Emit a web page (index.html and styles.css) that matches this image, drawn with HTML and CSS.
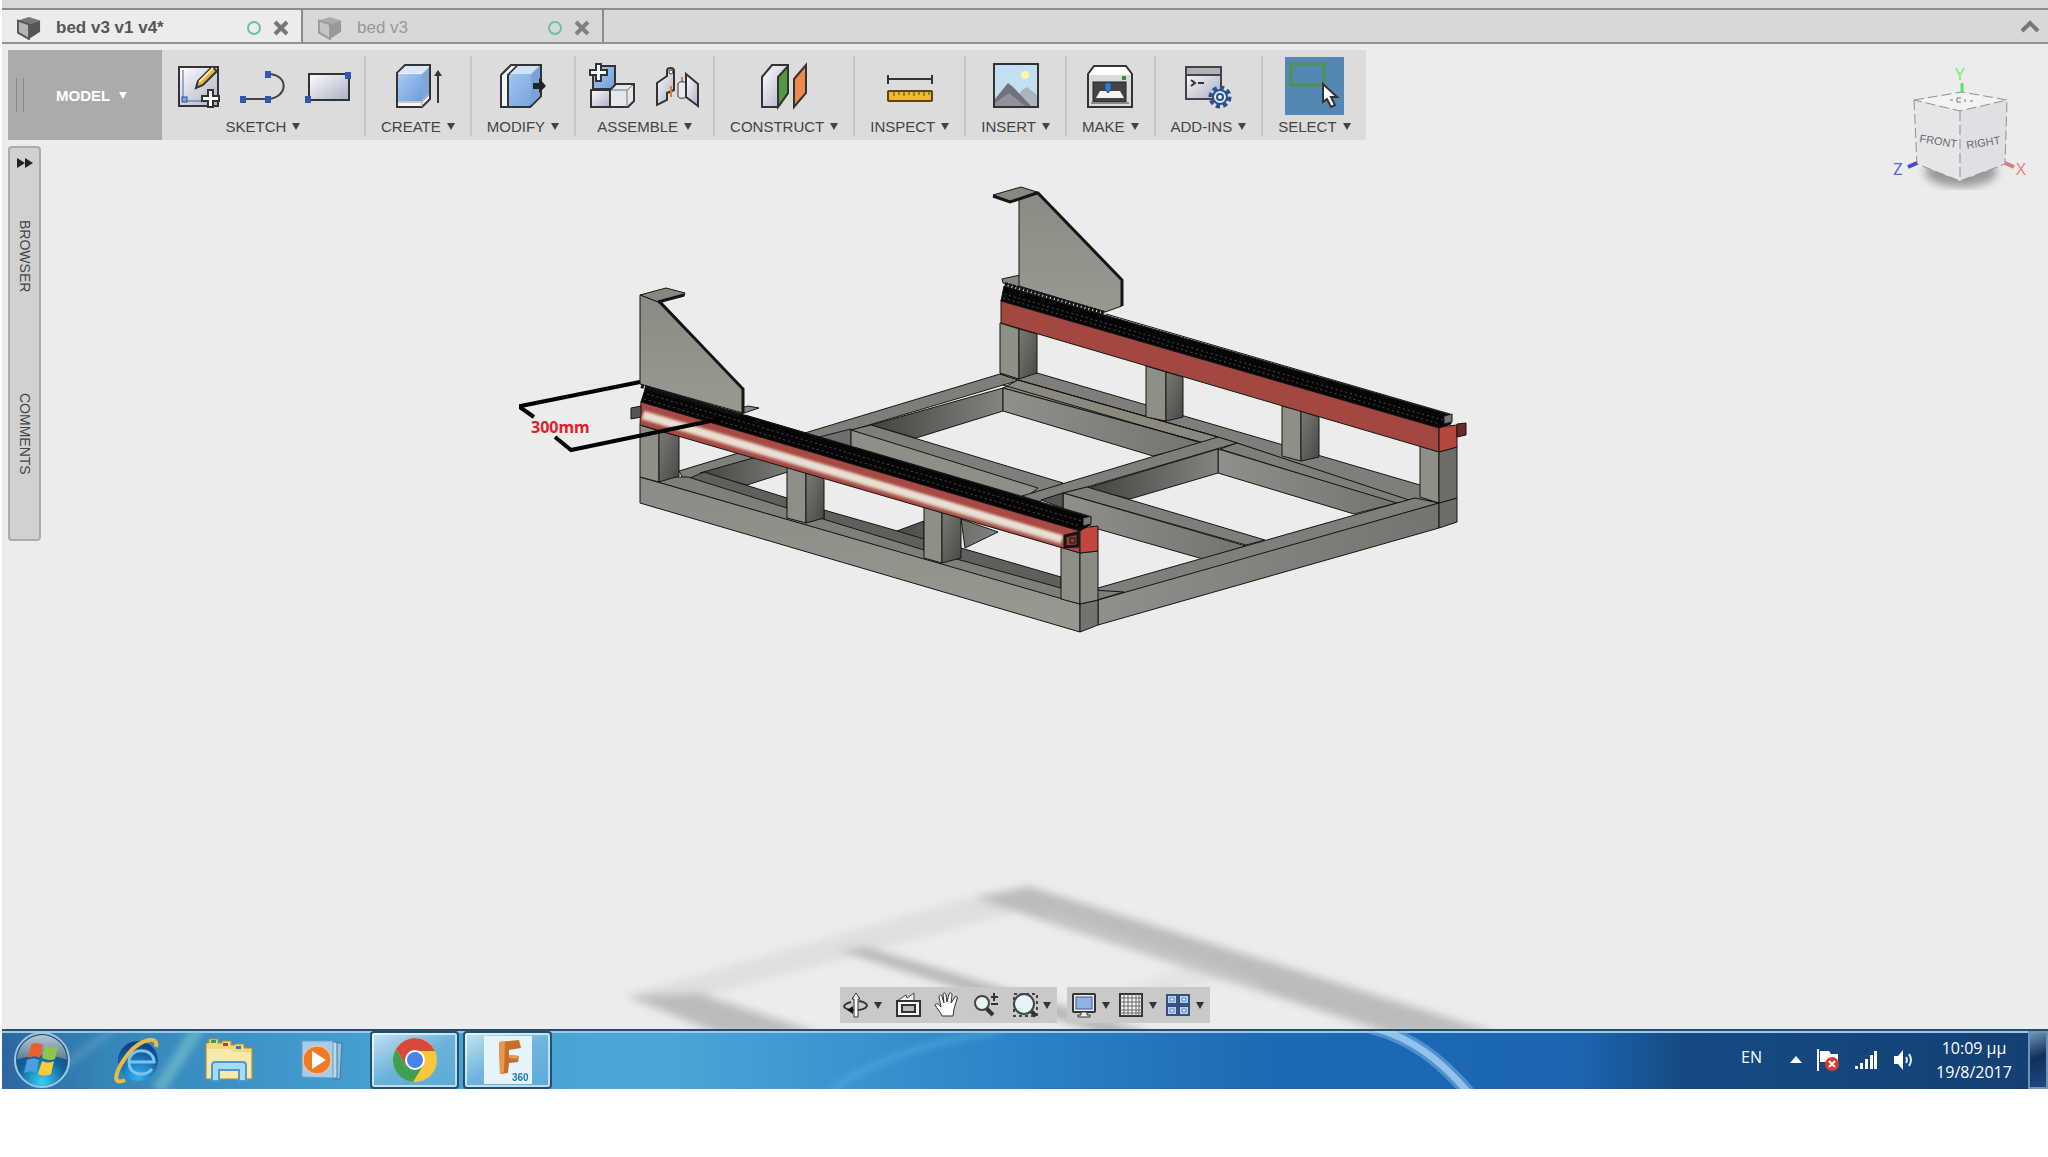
FILE: index.html
```html
<!DOCTYPE html>
<html lang="en">
<head>
<meta charset="UTF-8">
<meta name="viewport" content="width=device-width, initial-scale=1.0">
<title>bed v3 v1 v4*</title>
<link rel="stylesheet" href="styles.css">
</head>
<body>
<div class="desktop">

    <!-- document tabs -->
    <header class="tabs">
        <div class="tab tab-active">
            <svg class="tab-cube" viewBox="0 0 26 26"><path d="M1 5 13 1 25 5 13 9z" fill="#777"/><path d="M1 5 13 9V25L1 18z" fill="#b4b4b4" stroke="#555" stroke-width="2"/><path d="M13 9 25 5V17L13 25z" fill="#555"/></svg>
            <a class="tab-name" href="#">bed v3 v1 v4*</a>
            <span class="tab-status"></span>
            <button class="icon-button" aria-label="Close bed v3 v1 v4"><svg width="16" height="16" viewBox="0 0 16 16"><path d="M2 2 14 14M14 2 2 14" stroke="#777" stroke-width="4"/></svg></button>
        </div>
        <div class="tab">
            <svg class="tab-cube" viewBox="0 0 26 26"><path d="M1 5 13 1 25 5 13 9z" fill="#aaa"/><path d="M1 5 13 9V25L1 18z" fill="#c4c4c4" stroke="#999" stroke-width="2"/><path d="M13 9 25 5V17L13 25z" fill="#999"/></svg>
            <a class="tab-name" href="#">bed v3</a>
            <span class="tab-status"></span>
            <button class="icon-button" aria-label="Close bed v3"><svg width="16" height="16" viewBox="0 0 16 16"><path d="M2 2 14 14M14 2 2 14" stroke="#808080" stroke-width="4"/></svg></button>
        </div>
        <button class="icon-button tabs-collapse" aria-label="Collapse"><svg width="20" height="14" viewBox="0 0 20 14"><path d="M2 12 10 4 18 12" fill="none" stroke="#777" stroke-width="4"/></svg></button>
    </header>

    <main class="workspace">
        <svg class="scene" viewBox="2 44 2046 985" preserveAspectRatio="xMidYMin slice">
            <defs>
                <filter id="soft" x="-10%" y="-10%" width="120%" height="120%"><feGaussianBlur stdDeviation="4"/></filter>
                <filter id="tube" x="-5%" y="-20%" width="110%" height="140%"><feGaussianBlur stdDeviation="1"/></filter>
                <linearGradient id="plate" x1="0" y1="0" x2="0" y2="1"><stop offset="0" stop-color="#8a8b84"/><stop offset="1" stop-color="#989991"/></linearGradient>
                <linearGradient id="shade"><stop offset="0" stop-color="#42433f"/><stop offset="1" stop-color="#83847d"/></linearGradient>
                <linearGradient id="unshade"><stop offset="0" stop-color="#8f9089"/><stop offset="1" stop-color="#73746e"/></linearGradient>
                <linearGradient id="post" x1="0" y1="0" x2="1" y2="1"><stop offset="0" stop-color="#7a7b75"/><stop offset="1" stop-color="#474843"/></linearGradient>
            </defs>

            <!-- ground shadow -->
            <g filter="url(#soft)">
                <path d="M985 893 1020 911 690 1000 630 994z" fill="#dfdfdf"/>
                <path d="M1117 990 1185 967 1226 979 1175 995z" fill="#e3e3e3"/>
                <path d="M975 898 1028 886 1500 1034H1392z" fill="#bcbcbc"/>
                <path d="M626 996 698 993 822 1034H720z" fill="#bcbcbc"/>
                <path d="M838 950 868 948 1155 1034H1104z" fill="#b6b6b6"/>
                <path d="M1045 912 1260 984" stroke="#cacaca" stroke-width="4"/>
            </g>

            <!-- base frame: back and inner beams -->
            <g class="edges">
                <path class="top" d="M679 471 1000 374 1020 380 684 480z"/>
                <path fill="url(#shade)" d="M871 425 1003 388V411L916 438z"/>
                <path fill="url(#shade)" d="M700 473 760 456 800 468 747 485z"/>
                <path fill="#6f706a" d="M815 438 851 429V450z"/>
                <path class="top" d="M1000 374 1037 373 1420 485 1439 503 1415 503 1237 443 1218 437 1018 380z"/>
                <path fill="#8b887d" d="M1018 380 1218 437 1204 443 1003 388z"/>
                <path fill="url(#unshade)" d="M1003 388 1204 443 1153 456 1003 411z"/>
                <path class="top" d="M1237 443 1415 502 1397 504 1220 449z"/>
                <path fill="url(#unshade)" d="M1218 449 1397 503 1354 514 1218 473z"/>
                <path class="top" d="M871 425 1063 483 1040 496 851 430z"/>
                <path class="side" d="M851 430 1038 488 1022 500 851 449z"/>
                <path class="top" d="M1218 437 1237 443 1087 487 1063 493 1038 502 1022 496z"/>
                <path fill="url(#shade)" d="M1087 488 1218 449V473L1130 499z"/>
                <path class="top" d="M1087 487 1265 540 1246 545 1063 493z"/>
                <path fill="url(#unshade)" d="M1063 493 1246 546 1203 559 1098 529 1063 515z"/>
                <path fill="#55564f" d="M1041 500 1063 493V508z"/>
                <path d="M1018 380 1218 437M1003 385 1198 442M1385 507 1415 498M1400 509 1439 498" fill="none"/>
            </g>

            <!-- base frame: front beams -->
            <g class="edges">
                <path class="top" d="M1098 588 1397 503 1415 498 1439 503 1098 602z"/>
                <path fill="url(#unshade)" d="M1098 600 1439 503V528L1098 625z"/>
                <path fill="#6d6e68" d="M1439 503 1457 498V522L1439 528z"/>
                <path fill="url(#shade)" d="M924 521V545L886 535zM961 519 998 532 965 548z"/>
                <path fill="#5f605a" d="M704 472 787 498V512L690 478z"/>
                <path fill="#5f605a" d="M824 510 894 530 924 539V553L824 521z"/>
                <path fill="#5f605a" d="M961 548 1061 577V592L958 560z"/>
                <path class="top" d="M640 477 688 477 787 508 924 550 1061 588 1124 592 1080 605z"/>
                <path fill="url(#plate)" d="M640 477 1080 604V632L640 503z"/>
                <path fill="#73746e" d="M1080 604 1098 600V625L1080 632z"/>
            </g>

            <!-- rear posts, beam and rail -->
            <g class="edges">
                <path class="side" d="M1000 323 1019 329V379L1000 373zM1146 366 1166 372V421L1146 417zM1282 406 1301 411V461L1282 456zM1420 446 1439 452V503L1420 497z"/>
                <path fill="url(#post)" d="M1019 329 1037 334V373L1019 379z"/>
                <path fill="url(#post)" d="M1166 372 1183 377V417L1166 421z"/>
                <path fill="url(#post)" d="M1301 411 1319 417V457L1301 461z"/>
                <path fill="#6c6d67" d="M1439 452 1457 447V498L1439 503z"/>
                <path fill="#a34841" d="M1001 300 1439 427V452L1001 323z"/>
                <path fill="#b5453d" d="M1439 427 1457 425V447L1439 452z"/>
                <path fill="#6a2b27" d="M1457 424 1466 423V435L1457 437z"/>
                <path fill="#060606" d="M1004 286 1451 415V424L1439 428 1001 301z"/>
                <path d="M1106 314 1450 414" stroke="#767676"/>
                <path class="teeth" d="M1003 298 1440 424M1004 294 1443 420"/>
                <path fill="#777" d="M1444 416 1452 414V422L1444 424z"/>
                <path fill="#878880" d="M993 195 1021 187 1037 192 1010 202z"/>
                <path fill="#878880" d="M1002 279 1020 275 1110 307 1105 312 1003 283z"/>
                <path fill="url(#plate)" d="M1019 200 1037 192 1122 280V306L1105 312 1019 286z"/>
                <path class="thick" d="M1037 192 1122 280V306M993 196 1010 202 1037 193" fill="none"/>
                <path class="flange" d="M1005 284 1105 313"/>
            </g>

            <!-- front posts, beam, tube and rail -->
            <g class="edges">
                <path class="side" d="M640 425 659 431V482L640 477zM787 467 806 473V523L787 518zM924 507 942 512V563L924 558zM1061 547 1080 553V604L1061 599z"/>
                <path fill="url(#post)" d="M659 431 679 436V476L659 482z"/>
                <path fill="url(#post)" d="M806 473 824 478V518L806 523z"/>
                <path fill="url(#post)" d="M942 512 961 518V558L942 563z"/>
                <path fill="#8a8b84" d="M1080 553 1098 551V600L1080 604z"/>
                <path fill="#a84a43" d="M641 401 1080 529V553L640 425z"/>
                <path fill="#c0463e" d="M1080 528 1098 526V551L1080 553z"/>
                <path fill="#555" d="M631 408 641 406V417L631 419z"/>
            </g>
            <g filter="url(#tube)">
                <path d="M643 415 1062 540" stroke="#c89a8e" stroke-width="10"/>
                <path d="M643 415 1062 539" stroke="#e9dfd2" stroke-width="7"/>
            </g>
            <g class="edges">
                <path class="thick" fill="#8f3d37" d="M1065 536 1078 533V546L1065 547z"/>
                <path fill="none" d="M1070 538H1075V543H1070z"/>
                <path fill="#060606" d="M646 386 1090 517V525L1080 531 641 402z"/>
                <path d="M745 415 1089 516" stroke="#767676"/>
                <path class="teeth" d="M644 399 1080 526M647 394 1082 521"/>
                <path fill="#777" d="M1083 518 1091 516V524L1083 526z"/>
                <path fill="#878880" d="M738 409 748 406 759 408 741 414z"/>
                <path fill="#878880" d="M640 295 666 288 685 293 684 296 658 302z"/>
                <path fill="url(#plate)" d="M640 295 658 302 743 389V413L640 384z"/>
                <path class="thick" d="M660 302 743 389V413M658 302 684 295" fill="none"/>
                <path class="flange" d="M641 386 741 415"/>
            </g>

            <!-- dimension -->
            <path class="dimension" d="M640 382 521 406V408L534 417M555 437 571 450 720 419"/>
            <text class="dimension-text" x="531" y="433">300mm</text>
        </svg>

        <!-- ribbon -->
        <div class="ribbon">
            <button class="model-button">MODEL<span class="caret"></span></button>

            <div class="tool-group wide">
                <div class="tools">
                    <button class="icon-button" aria-label="Create sketch"><svg class="tool-icon" viewBox="0 0 48 48"><defs><linearGradient id="paper" x1="0" y1="0" x2="1" y2="1"><stop offset="0" stop-color="#fff"/><stop offset="1" stop-color="#aab0c2"/></linearGradient></defs><rect x="5" y="5" width="39" height="39" fill="url(#paper)" stroke="#333" stroke-width="2"/><path d="M9 8V39H32" fill="none" stroke="#3f68b8" stroke-width="1"/><rect x="8" y="35" width="5" height="5" fill="#7fa7e0" stroke="#2850a0"/><path d="M22 26 24 19 38 5 43 9 29 23z" fill="#e8b33b" stroke="#333" stroke-width="2"/><path d="M25 20 39 6" stroke="#ffe9a8" stroke-width="2"/><path d="M34 28H39V34H45V39H39V45H34V39H28V34H34z" fill="#fff" stroke="#333" stroke-width="2"/></svg></button>
                    <button class="icon-button" aria-label="Line"><svg class="tool-icon" viewBox="0 0 48 48"><path d="M4 37H28C50 36 50 12 29 12" fill="none" stroke="#444" stroke-width="2"/><path d="M1 34h6v7h-6zM26 34h6v7h-6zM26 9h6v7h-6z" fill="#2f58b4"/></svg></button>
                    <button class="icon-button" aria-label="Rectangle"><svg class="tool-icon" viewBox="0 0 48 48"><rect x="5" y="12" width="40" height="26" fill="url(#paper)" stroke="#333" stroke-width="2"/><path d="M1 34h6v7H1zM41 10h6v7h-6z" fill="#2f58b4"/></svg></button>
                </div>
                <button class="group-label">SKETCH<span class="caret"></span></button>
            </div>

            <div class="tool-group">
                <div class="tools">
                    <button class="icon-button" aria-label="Extrude"><svg class="tool-icon" viewBox="0 0 48 48"><defs><linearGradient id="blue" x1="0" y1="0" x2="1" y2="1"><stop offset="0" stop-color="#a9ccf3"/><stop offset="1" stop-color="#6c9dd8"/></linearGradient></defs><path d="M3 11 11 3H36V37L28 45H3z" fill="#f2f4f7" stroke="#333" stroke-width="2"/><path d="M4 12H28V39H4z" fill="url(#blue)"/><path d="M4 11 12 4H35L28 11z" fill="#d8e8fa"/><path d="M28 12 35 5V32L28 39z" fill="#7fa8d8"/><path d="M4 40H28L35 33M28 40V45" fill="none" stroke="#999"/><path d="M44 41V12" stroke="#333" stroke-width="2"/><path d="M44 8 48 14H40z" fill="#333"/></svg></button>
                </div>
                <button class="group-label">CREATE<span class="caret"></span></button>
            </div>

            <div class="tool-group">
                <div class="tools">
                    <button class="icon-button" aria-label="Press pull"><svg class="tool-icon" viewBox="0 0 48 48"><path d="M2 13 12 3H42V34L31 45H2z" fill="#f2f4f7" stroke="#333" stroke-width="2"/><path d="M9 13 19 3H42V34L31 45H9z" fill="url(#blue)" stroke="#333" stroke-width="2"/><path d="M11 12 19 4H40L32 12z" fill="#cfe2f8"/><path d="M32 13 41 4V34L32 43z" fill="#78a3d6"/><path d="M34 21H40V16L47 24 40 31V27H34z" fill="#222"/></svg></button>
                </div>
                <button class="group-label">MODIFY<span class="caret"></span></button>
            </div>

            <div class="tool-group wide">
                <div class="tools">
                    <button class="icon-button" aria-label="New component"><svg class="tool-icon" viewBox="0 0 48 48"><path d="M5 12 10 4H27V27H5z" fill="url(#blue)" stroke="#333" stroke-width="2"/><path d="M3 28H22V45H3z" fill="url(#paper)" stroke="#333" stroke-width="2"/><path d="M22 28 28 22H46V39L40 45H22z" fill="#e4e7ec" stroke="#333" stroke-width="2"/><path d="M23 28H39V45M39 28 45 23" stroke="#777" fill="none"/><path d="M8 2H13V8H19V13H13V19H8V13H2V8H8z" fill="#fff" stroke="#333" stroke-width="2"/></svg></button>
                    <button class="icon-button" aria-label="Joint"><svg class="tool-icon" viewBox="0 0 48 48"><path d="M4 21 14 14V9C14 5 21 5 21 9V28L14 31V38L4 43z" fill="url(#paper)" stroke="#333" stroke-width="2"/><circle cx="18" cy="10" r="2" fill="#fff" stroke="#333"/><path d="M18 24V35M29 15V24" stroke="#e8792b" stroke-width="2"/><path d="M25 22C25 19 33 19 33 22V34C33 37 25 37 25 34z" fill="#e8eaee" stroke="#333"/><path d="M33 12 45 22V44L33 35z" fill="url(#paper)" stroke="#333" stroke-width="2"/></svg></button>
                </div>
                <button class="group-label">ASSEMBLE<span class="caret"></span></button>
            </div>

            <div class="tool-group">
                <div class="tools">
                    <button class="icon-button" aria-label="Offset plane"><svg class="tool-icon" viewBox="0 0 48 48"><path d="M2 15 12 3H28V31L18 45H2z" fill="url(#paper)" stroke="#333" stroke-width="2"/><path d="M18 15 28 4V31L18 45z" fill="#4f9b3f" stroke="#333" stroke-width="2"/><path d="M34 17 46 3V31L34 45z" fill="#ed8a50" stroke="#333" stroke-width="2"/></svg></button>
                </div>
                <button class="group-label">CONSTRUCT<span class="caret"></span></button>
            </div>

            <div class="tool-group">
                <div class="tools">
                    <button class="icon-button" aria-label="Measure"><svg class="tool-icon" viewBox="0 0 48 48"><path d="M2 13V22M46 13V22M2 17H46" stroke="#333" stroke-width="2"/><rect x="2" y="29" width="44" height="10" rx="1" fill="#f0b92f" stroke="#5b4510" stroke-width="2"/><path d="M8 30v4M13 30v3M18 30v4M23 30v3M28 30v4M33 30v3M38 30v4M43 30v3" stroke="#5b4510"/></svg></button>
                </div>
                <button class="group-label">INSPECT<span class="caret"></span></button>
            </div>

            <div class="tool-group">
                <div class="tools">
                    <button class="icon-button" aria-label="Insert image"><svg class="tool-icon" viewBox="0 0 48 48"><rect x="2" y="2" width="44" height="43" fill="#c3e0f3" stroke="#333" stroke-width="2"/><circle cx="33" cy="13" r="4" fill="#fff6a6"/><path d="M20 44 30 28 35 25 45 33V44z" fill="#aab5bf"/><path d="M3 37 16 21 21 25 39 44H3z" fill="#6d727b"/><path d="M3 44V41L17 31 33 44z" fill="#8d929b"/></svg></button>
                </div>
                <button class="group-label">INSERT<span class="caret"></span></button>
            </div>

            <div class="tool-group">
                <div class="tools">
                    <button class="icon-button" aria-label="3D print"><svg class="tool-icon" viewBox="0 0 48 48"><path d="M2 12 8 4H40L46 12V45H2z" fill="#fff" stroke="#333" stroke-width="2"/><path d="M3 13H45V44H3z" fill="#d9dbde"/><path d="M36 14H40V18H36z" fill="#3c8f35"/><rect x="7" y="20" width="33" height="20" fill="#444" stroke="#222"/><path d="M14 29H34L38 36H10z" fill="#f4f4f4"/><path d="M19 21H25V27L22 31 19 27z" fill="#3d78c8" stroke="#1f4f96"/><path d="M5 41H43" stroke="#888" stroke-width="2"/></svg></button>
                </div>
                <button class="group-label">MAKE<span class="caret"></span></button>
            </div>

            <div class="tool-group">
                <div class="tools">
                    <button class="icon-button" aria-label="Scripts and add-ins"><svg class="tool-icon" viewBox="0 0 48 48"><rect x="2" y="5" width="35" height="32" fill="url(#paper)" stroke="#444" stroke-width="2"/><path d="M3 6H36V12H3z" fill="#aeb2bb"/><path d="M3 13H36" stroke="#444" stroke-width="2"/><path d="M7 18 11 21 7 24M14 21H20" fill="none" stroke="#333" stroke-width="2"/><circle cx="36" cy="35" r="9" fill="none" stroke="#2b528c" stroke-width="5" stroke-dasharray="4 3"/><circle cx="36" cy="35" r="7" fill="#dce9f8" stroke="#2b528c" stroke-width="2"/><circle cx="36" cy="35" r="3" fill="#fff" stroke="#2b528c" stroke-width="2"/></svg></button>
                </div>
                <button class="group-label">ADD-INS<span class="caret"></span></button>
            </div>

            <div class="tool-group">
                <div class="tools">
                    <button class="icon-button select-button" aria-label="Select"><svg viewBox="0 0 59 58"><rect x="6" y="7" width="33" height="21" fill="none" stroke="#4f9350" stroke-width="3"/><path d="M38 27V45L42 42 46 50 50 48 46 40H52z" fill="#fff" stroke="#333" stroke-width="2"/></svg></button>
                </div>
                <button class="group-label">SELECT<span class="caret"></span></button>
            </div>
        </div>

        <!-- collapsed side panels -->
        <aside class="side-panel">
            <button class="icon-button" aria-label="Expand panels"><svg width="16" height="10" viewBox="0 0 16 10"><path d="M0 0 8 5 0 10zM8 0 16 5 8 10z" fill="#222"/></svg></button>
            <button class="side-tab">BROWSER</button>
            <button class="side-tab">COMMENTS</button>
        </aside>

        <!-- view cube -->
        <svg class="view-cube" viewBox="1890 60 140 146">
            <ellipse cx="1961" cy="172" rx="36" ry="15" fill="#999" filter="url(#soft)"/>
            <path d="M1914 100 1962 92 2007 100 1960 111z" fill="#f3f3f3"/>
            <path d="M1914 100 1960 111V181L1917 164z" fill="#e5e6e8"/>
            <path d="M2007 100 1960 111V181L2005 164z" fill="#dfe0e3"/>
            <path d="M1914 100 1962 92 2007 100 1960 111zM1914 100 1917 164 1960 181 2005 164 2007 100M1960 111V181" fill="none" stroke="#909090" stroke-width="1" stroke-dasharray="10 4"/>
            <path d="M1950 100h3M1957 98v4M1957 98h4M1957 102h4M1965 99v3M1970 101h3" stroke="#777" stroke-width="1"/>
            <path d="M1962 83V93" stroke="#5fe060" stroke-width="3"/>
            <path d="M1917 163 1908 167" stroke="#4848cf" stroke-width="4"/>
            <path d="M2005 163 2014 167" stroke="#e57878" stroke-width="4"/>
            <text class="axis axis-y" x="1955" y="80">Y</text>
            <text class="axis axis-z" x="1893" y="175">Z</text>
            <text class="axis axis-x" x="2016" y="175">X</text>
            <text class="cube-face" transform="translate(1919 142) rotate(9)">FRONT</text>
            <text class="cube-face" transform="translate(1967 149) rotate(-9)">RIGHT</text>
        </svg>

        <!-- navigation bar -->
        <nav class="nav-bar">
            <div class="nav-group">
                <button class="icon-button nav-menu" aria-label="Orbit"><svg class="nav-icon" viewBox="0 0 26 26"><path d="M8 10C-3 13 0 18 12 18 26 18 28 11 16 9" fill="none" stroke="#333" stroke-width="2"/><path d="M11 25V7H9L13 1 17 7H15V25z" fill="#fff" stroke="#333"/><path d="M4 18 10 14V22z" fill="#111"/></svg><span class="caret"></span></button>
                <button class="icon-button" aria-label="Look at"><svg class="nav-icon" viewBox="0 0 26 26"><path d="M2 9 11 3 12 6 19 1V9" fill="#eee" stroke="#444"/><rect x="2" y="9" width="23" height="15" fill="#fafafa" stroke="#333" stroke-width="2"/><rect x="7" y="13" width="13" height="7" fill="#b9b9b9" stroke="#333" stroke-width="2"/></svg></button>
                <button class="icon-button" aria-label="Pan"><svg class="nav-icon" viewBox="0 0 26 26"><path d="M8 24C6 19 3 17 1 13 2 11 4 11 7 15L5 5C6 2 8 3 8 5L10 11 9 2C10 0 12 1 12 3L13 10 15 2C16 0 18 1 18 3L17 11 21 5C22 3 24 5 23 7L20 17 19 24z" fill="#fff" stroke="#333"/></svg></button>
                <button class="icon-button" aria-label="Zoom"><svg class="nav-icon" viewBox="0 0 26 26"><path d="M13 16 20 23" stroke="#333" stroke-width="4"/><circle cx="9" cy="11" r="7" fill="#e6f4f6" stroke="#444" stroke-width="2"/><path d="M18 5H25M21 1V9M18 12H25" stroke="#333" stroke-width="2"/></svg></button>
                <button class="icon-button nav-menu" aria-label="Zoom window"><svg class="nav-icon" viewBox="0 0 26 26"><rect x="2" y="2" width="23" height="22" fill="none" stroke="#444" stroke-width="2" stroke-dasharray="3 3"/><path d="M17 17 24 24" stroke="#333" stroke-width="4"/><circle cx="12" cy="12" r="10" fill="#e6f4f6" stroke="#444" stroke-width="2"/></svg><span class="caret"></span></button>
            </div>
            <div class="nav-group display-group">
                <button class="icon-button nav-menu" aria-label="Display settings"><svg class="nav-icon" viewBox="0 0 26 26"><rect x="2" y="2" width="22" height="18" rx="1" fill="#eee" stroke="#333" stroke-width="2"/><rect x="5" y="5" width="16" height="12" fill="#8fb2e3" stroke="#3c5a8a"/><path d="M10 20H16V23H19V25H7V23H10z" fill="#eee" stroke="#333"/></svg><span class="caret"></span></button>
                <button class="icon-button nav-menu" aria-label="Grid and snaps"><svg class="nav-icon" viewBox="0 0 26 26"><rect x="2" y="2" width="22" height="22" fill="#f4f4f4" stroke="#333" stroke-width="2"/><path d="M6 2V24M10 2V24M14 2V24M18 2V24M21 2V24M2 6H24M2 10H24M2 14H24M2 18H24M2 21H24" stroke="#666"/></svg><span class="caret"></span></button>
                <button class="icon-button nav-menu" aria-label="Viewports"><svg class="nav-icon" viewBox="0 0 26 26"><path d="M2 3H12V12H2zM14 3H24V12H14zM2 14H12V23H2zM14 14H24V23H14z" fill="#b8d0f0" stroke="#34517f" stroke-width="2"/><path d="M5 6h4v3H5zM17 6h4v3h-4zM5 17h4v3H5zM17 17h4v3h-4z" fill="#eaf2fc" stroke="#5d83bb"/></svg><span class="caret"></span></button>
            </div>
        </nav>
    </main>

    <!-- taskbar -->
    <footer class="taskbar">
        <svg class="aurora" viewBox="0 0 2048 60" preserveAspectRatio="none">
            <g filter="url(#soft)">
                <path d="M30 60 110 0" stroke="#7fb0cf" stroke-width="7" opacity=".4"/>
                <path d="M156 62 196 -2" stroke="#80cdd0" stroke-width="12" opacity=".6"/>
                <path d="M830 62C870 30 930 10 1000 0" fill="none" stroke="#6dbbe8" stroke-width="6" opacity=".4"/>
            </g>
            <path d="M1370 -4C1410 6 1440 30 1468 64" fill="none" stroke="#7fb9ea" stroke-width="14" opacity=".5"/>
            <path d="M1370 -4C1410 6 1440 30 1468 64" fill="none" stroke="#b0d8f7" stroke-width="7" opacity=".7"/>
        </svg>

        <button class="icon-button start" aria-label="Start"><svg viewBox="0 0 58 58"><defs><radialGradient id="orb" cx=".5" cy=".9" r=".9"><stop offset="0" stop-color="#35d0f5"/><stop offset=".5" stop-color="#14609c"/><stop offset="1" stop-color="#1b3f66"/></radialGradient><linearGradient id="gloss" x1="0" y1="0" x2="0" y2="1"><stop offset="0" stop-color="#dde6ec"/><stop offset="1" stop-color="#6f8596"/></linearGradient></defs><circle cx="29" cy="29" r="27" fill="url(#orb)" stroke="#9cc8e2" stroke-width="2"/><path d="M4 29A25 25 0 0 1 54 29C42 23 16 23 4 29z" fill="url(#gloss)" opacity=".8"/><path d="M18 14C22 11 26 12 30 14L27 27C23 25 20 25 15 27z" fill="#e8602c"/><path d="M32 15C37 17 41 17 45 15L42 28C38 30 34 29 29 27z" fill="#8fc549"/><path d="M14 29C19 27 22 27 26 29L23 42C19 40 16 40 11 42z" fill="#4c9fe0"/><path d="M29 30C33 32 37 32 41 30L38 43C34 45 30 45 25 43z" fill="#fccb3a"/></svg></button>
        <button class="icon-button launcher" aria-label="Internet Explorer"><svg viewBox="0 0 50 50"><defs><radialGradient id="globe" cx=".5" cy=".9" r=".8"><stop offset="0" stop-color="#2fb4f0"/><stop offset="1" stop-color="#0d4488"/></radialGradient></defs><circle cx="27" cy="26" r="20" fill="url(#globe)"/><path d="M18 27H43C43 12 18 12 18 27 18 41 35 42 41 34" fill="none" stroke="#7cc4ee" stroke-width="3"/><path d="M45 12C48 0 30 4 18 18 5 34-1 52 14 45" fill="none" stroke="#e9bd45" stroke-width="4"/></svg></button>
        <button class="icon-button launcher" aria-label="Windows Explorer"><svg viewBox="0 0 50 50"><path d="M2 8H5V4H14V8H18V6H27V10H31V9H40V13H48V44H2z" fill="#f1d982" stroke="#b98c33"/><path d="M7 5h5v3H7z" fill="#3f9a45"/><path d="M19 8h5v3h-5z" fill="#c23b2e"/><path d="M32 11h5v3h-5z" fill="#3675b8"/><path d="M3 14H25L29 17H47V43H3z" fill="#f8e9ab"/><path d="M8 30C8 28 10 27 12 27H38C40 27 42 28 42 30V46H35V35H15V46H8z" fill="#a9daf3" stroke="#4a9ccc" stroke-width="2"/></svg></button>
        <button class="icon-button launcher" aria-label="Media Player"><svg viewBox="0 0 50 50"><path d="M34 8H45L43 44H34z" fill="#8fc4e6" stroke="#46789c"/><path d="M30 7H40V43H30z" fill="#b7dcf2" stroke="#46789c"/><path d="M5 6H36V43L5 42z" fill="#a5cdea" stroke="#6a9cc0"/><circle cx="20" cy="25" r="14" fill="#ee7a25" stroke="#fbd1a4"/><path d="M15 16 29 25 15 34z" fill="#fff"/></svg></button>
        <button class="icon-button launcher running" aria-label="Chrome"><svg viewBox="0 0 50 50"><circle cx="25" cy="25" r="22" fill="#f6c83a"/><path d="M6 14A22 22 0 0 1 45 16H25L16 30z" fill="#d8493c"/><path d="M6 14A22 22 0 0 0 23 47L34 29 25 34 16 30z" fill="#3f9f52"/><circle cx="25" cy="25" r="10" fill="#fff"/><circle cx="25" cy="25" r="8" fill="#4a82ea"/></svg></button>
        <button class="icon-button launcher running" aria-label="Fusion 360"><svg viewBox="0 0 50 50"><path d="M1 1H49V49H1z" fill="#e5f3fb"/><path d="M16 7 36 5 38 13 26 15V20L36 21 35 27 26 28 25 38 17 39z" fill="#c5702a"/><path d="M16 7 22 6 21 37 17 39zM26 20 36 21 34 24 26 23z" fill="#e59a4e"/><text class="app-tag" x="29" y="46">360</text></svg></button>

        <div class="tray">
            <span class="language">EN</span>
            <button class="icon-button" aria-label="Show hidden icons"><svg width="12" height="8" viewBox="0 0 12 8"><path d="M0 7 6 0 12 7z" fill="#fff"/></svg></button>
            <svg width="24" height="24" viewBox="0 0 24 24"><path d="M2 1V23" stroke="#fff" stroke-width="2"/><path d="M4 3H13L15 6H22V14H4z" fill="#fff"/><circle cx="16" cy="16" r="7" fill="#d93a32"/><path d="M13 13 19 19M19 13 13 19" stroke="#fff" stroke-width="2"/></svg>
            <svg width="24" height="20" viewBox="0 0 24 20"><path d="M1 16h3v3H1zM6 13h3v6H6zM11 9h3v10h-3zM16 5h3v14h-3zM20 1h3v18h-3z" fill="#fff"/></svg>
            <svg width="24" height="24" viewBox="0 0 24 24"><path d="M2 8H6L11 2V22L6 16H2z" fill="#fff"/><path d="M14 9Q16 12 14 15M17 6Q21 12 17 18" fill="none" stroke="#dfe9f3" stroke-width="2"/></svg>
            <div class="clock"><span>10:09 μμ</span><span>19/8/2017</span></div>
            <button class="show-desktop" aria-label="Show desktop"></button>
        </div>
    </footer>
</div>
</body>
</html>
```
FILE: styles.css
```css
* {
    box-sizing: border-box;
}
body {
    margin: 0;
    background-color: #fff;
    font-family: "Liberation Sans", Arial, sans-serif;
    color: #444;
}
button {
    font-family: inherit;
    border: none;
    cursor: pointer;
}
.desktop {
    display: flex;
    flex-direction: column;
    min-height: 100vh;
    padding: 0 0 68px 2px;
}
.icon-button {
    display: flex;
    align-items: center;
    padding: 0;
    background: none;
}
.caret {
    border-left: 4px solid transparent;
    border-right: 4px solid transparent;
    border-top: 7px solid currentColor;
}

/* document tabs */
.tabs {
    display: flex;
    height: 44px;
    padding-top: 8px;
    background: linear-gradient(#d9d9d9 8px, #8c8c8c 8px, #8c8c8c 10px, #d8d8d8 10px);
    border-bottom: 2px solid #929292;
}
.tab {
    display: flex;
    align-items: center;
    width: 301px;
    padding: 6px 12px 0 14px;
    border-right: 2px solid #8c8c8c;
    font-size: 17px;
}
.tab-active {
    background: linear-gradient(#8c8c8c 2px, #ececec 2px);
    font-weight: bold;
}
.tab-cube {
    width: 26px;
    height: 24px;
    margin-right: 14px;
}
.tab-name {
    flex: 1;
    color: #999;
    text-decoration: none;
}
.tab-active .tab-name {
    color: #555;
}
.tab-status {
    width: 14px;
    height: 14px;
    margin-right: 12px;
    border: 2px solid #6fbfa5;
    border-radius: 50%;
}
.tabs-collapse {
    margin: 2px 8px 0 auto;
}

/* model view */
.workspace {
    position: relative;
    flex: 1;
    padding: 6px;
    background-color: #ececec;
}
.scene {
    position: absolute;
    inset: 0;
    width: 100%;
    height: 100%;
}
.edges path {
    stroke: #151515;
}
.edges .top {
    fill: #7e7f78;
}
.edges .side {
    fill: #8e8f87;
}
.edges .thick {
    stroke-width: 3px;
}
.edges .teeth {
    stroke: #4c4c4c;
    stroke-dasharray: 2 3;
}
.edges .flange {
    stroke-width: 4px;
    stroke-dasharray: 3 1;
}
.dimension {
    fill: none;
    stroke: #000;
    stroke-width: 4px;
}
.dimension-text {
    fill: #e0202a;
    font: bold 16px "Noto Sans", sans-serif;
}

/* ribbon */
.ribbon {
    position: relative;
    display: flex;
    width: fit-content;
    background-color: #dcdcdc;
}
.model-button {
    display: flex;
    align-items: center;
    gap: 9px;
    width: 154px;
    padding: 0 0 0 48px;
    background: linear-gradient(#8a8a8a, #8a8a8a) 8px 50% / 1px 34px no-repeat,
                linear-gradient(#8a8a8a, #8a8a8a) 15px 50% / 1px 34px no-repeat,
                #ababab;
    color: #fff;
    font-size: 15px;
    font-weight: bold;
}
.tool-group {
    display: flex;
    flex-direction: column;
    align-items: center;
    margin: 6px 0 4px;
    padding: 0 15px;
    border-right: 2px solid #c6c6c6;
}
.tool-group.wide {
    padding: 0 12px;
}
.tool-group:last-child {
    border-right: none;
}
.tools {
    display: flex;
    align-items: center;
    gap: 17px;
    height: 60px;
}
.tool-icon {
    width: 48px;
    height: 48px;
}
.select-button {
    width: 59px;
    height: 58px;
    background-color: #5587b3;
}
.group-label {
    display: flex;
    align-items: center;
    justify-content: center;
    gap: 6px;
    height: 20px;
    padding: 0;
    background: none;
    color: #444;
    font-size: 15px;
}

/* side panels */
.side-panel {
    position: relative;
    display: flex;
    flex-direction: column;
    align-items: center;
    width: 33px;
    height: 395px;
    margin-top: 6px;
    padding-top: 10px;
    background-color: #d1d1d1;
    border: 2px solid #acacac;
    border-radius: 4px;
}
.side-tab {
    height: 177px;
    padding: 0;
    background: none;
    color: #444;
    font-size: 14px;
    text-align: center;
    writing-mode: vertical-rl;
}

/* view cube */
.view-cube {
    position: absolute;
    top: 16px;
    right: 18px;
    width: 140px;
    height: 146px;
}
.axis {
    font: 17px "Noto Sans", sans-serif;
}
.axis-x {
    fill: #f08080;
}
.axis-y {
    fill: #74ee74;
}
.axis-z {
    fill: #6060e0;
}
.cube-face {
    fill: #666a72;
    font-size: 11px;
}

/* navigation bar */
.nav-bar {
    position: absolute;
    bottom: 6px;
    left: 50%;
    display: flex;
    gap: 10px;
    transform: translateX(-50%);
}
.nav-group {
    display: flex;
    align-items: center;
    gap: 13px;
    height: 36px;
    padding: 0 6px 0 3px;
    background-color: #c9c9c9;
}
.nav-menu {
    gap: 5px;
    color: #333;
}
.nav-icon {
    width: 26px;
    height: 26px;
}
.display-group {
    gap: 8px;
    padding: 0 6px 0 4px;
}

/* taskbar */
.taskbar {
    position: relative;
    display: flex;
    align-items: center;
    height: 60px;
    padding-left: 11px;
    background: linear-gradient(90deg, #2c679f, #3585b9 5%, #459fd0 18%, #4da6d8 32%, #2f86c8 48%, #1d69b3 62%, #1c66b1 77%, #164a85 82%, #143f73);
    border-top: 2px solid #274b69;
    box-shadow: inset 0 2px 0 #9cc9e6;
}
.taskbar > * {
    position: relative;
}
.taskbar .aurora {
    position: absolute;
    inset: 0;
    width: 100%;
    height: 100%;
}
.start,
.start svg {
    width: 58px;
    height: 58px;
}
.start {
    margin-right: 20px;
}
.launcher {
    justify-content: center;
    width: 89px;
    height: 58px;
    margin-right: 4px;
}
.launcher svg {
    width: 50px;
    height: 50px;
}
.running {
    background: linear-gradient(150deg, rgba(255, 255, 255, 0.7), rgba(255, 255, 255, 0.2) 50%, rgba(255, 255, 255, 0.1));
    border: 2px solid #24506f;
    border-radius: 4px;
    box-shadow: inset 0 0 0 2px rgba(255, 255, 255, 0.6);
}
.app-tag {
    fill: #1e78b8;
    font-size: 10px;
    font-weight: bold;
}
.tray {
    display: flex;
    align-items: center;
    align-self: stretch;
    gap: 14px;
    margin-left: auto;
    color: #fff;
    font: 16px "Open Sans", sans-serif;
}
.language {
    margin: 0 14px 6px 0;
}
.clock {
    display: flex;
    flex-direction: column;
    align-items: center;
    width: 80px;
    margin-left: 4px;
    line-height: 24px;
}
.show-desktop {
    align-self: stretch;
    width: 20px;
    background: linear-gradient(160deg, #6e93b5, #10305a 45%, #1b4a80);
    border: 2px solid #6f93b4;
}
```
